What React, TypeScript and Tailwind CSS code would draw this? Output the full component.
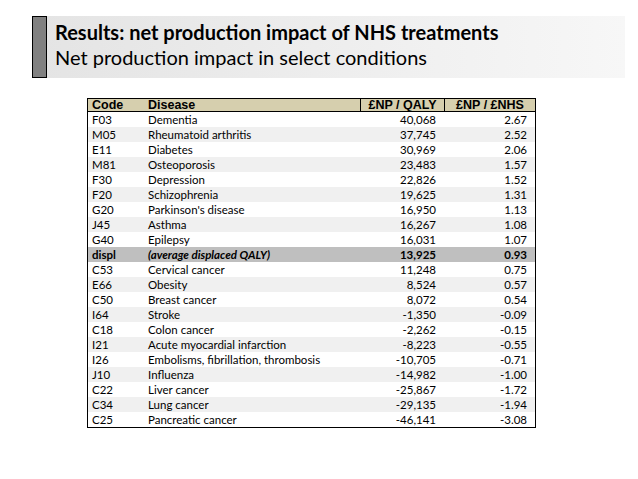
const rows: [string, string, string, string][] = [
  ['F03', 'Dementia', '40,068', '2.67'],
  ['M05', 'Rheumatoid arthritis', '37,745', '2.52'],
  ['E11', 'Diabetes', '30,969', '2.06'],
  ['M81', 'Osteoporosis', '23,483', '1.57'],
  ['F30', 'Depression', '22,826', '1.52'],
  ['F20', 'Schizophrenia', '19,625', '1.31'],
  ['G20', "Parkinson's disease", '16,950', '1.13'],
  ['J45', 'Asthma', '16,267', '1.08'],
  ['G40', 'Epilepsy', '16,031', '1.07'],
  ['displ', '(average displaced QALY)', '13,925', '0.93'],
  ['C53', 'Cervical cancer', '11,248', '0.75'],
  ['E66', 'Obesity', '8,524', '0.57'],
  ['C50', 'Breast cancer', '8,072', '0.54'],
  ['I64', 'Stroke', '-1,350', '-0.09'],
  ['C18', 'Colon cancer', '-2,262', '-0.15'],
  ['I21', 'Acute myocardial infarction', '-8,223', '-0.55'],
  ['I26', 'Embolisms, fibrillation, thrombosis', '-10,705', '-0.71'],
  ['J10', 'Influenza', '-14,982', '-1.00'],
  ['C22', 'Liver cancer', '-25,867', '-1.72'],
  ['C34', 'Lung cancer', '-29,135', '-1.94'],
  ['C25', 'Pancreatic cancer', '-46,141', '-3.08'],
]

export default function App() {
  return (
    <div className="w-[638px] h-[479px] bg-white overflow-hidden pt-[16px]">
      {/* Title band */}
      <div className="ml-[32px] w-[593px] h-[62px] flex bg-gradient-to-r from-[#e4e4e4] to-[#f7f7f7]">
        <div className="w-[15px] h-full bg-[#808080] border border-black" />
        <div className="pl-[8px] pt-[4px] font-['Lato',sans-serif] text-black">
          <div className="text-[20px] leading-[25px] font-bold">Results: net production impact of NHS treatments</div>
          <div className="text-[20px] leading-[25px]">Net production impact in select conditions</div>
        </div>
      </div>

      {/* Table */}
      <div className="ml-[87px] mt-[20px] w-[449px] border border-black">
        <div className="grid grid-cols-[60px_212px_84px_1fr] h-[13px] bg-[#d6cfae] border-b border-black font-['Liberation_Sans',sans-serif] font-bold text-[12.5px] leading-[13px] text-black">
          <div className="pl-[4px]">Code</div>
          <div>Disease</div>
          <div className="border-l border-black text-center">£NP / QALY</div>
          <div className="border-l border-black text-center">£NP / £NHS</div>
        </div>
        {rows.map(([code, disease, qaly, nhs], i) => {
          const displ = code === 'displ'
          const bg = displ ? 'bg-[#bfbfbf]' : i % 2 === 1 ? 'bg-[#f0f0f0]' : 'bg-white'
          return (
            <div
              key={code}
              className={`grid grid-cols-[60px_212px_84px_1fr] h-[15px] items-center font-['Lato',sans-serif] text-[11.5px] leading-[15px] text-black ${bg} ${displ ? 'font-bold' : ''}`}
            >
              <div className="pl-[4px]">{code}</div>
              <div className={displ ? 'italic' : ''}>{disease}</div>
              <div className="text-right pr-[8px]">{qaly}</div>
              <div className="text-right pr-[8px]">{nhs}</div>
            </div>
          )
        })}
      </div>
    </div>
  )
}
